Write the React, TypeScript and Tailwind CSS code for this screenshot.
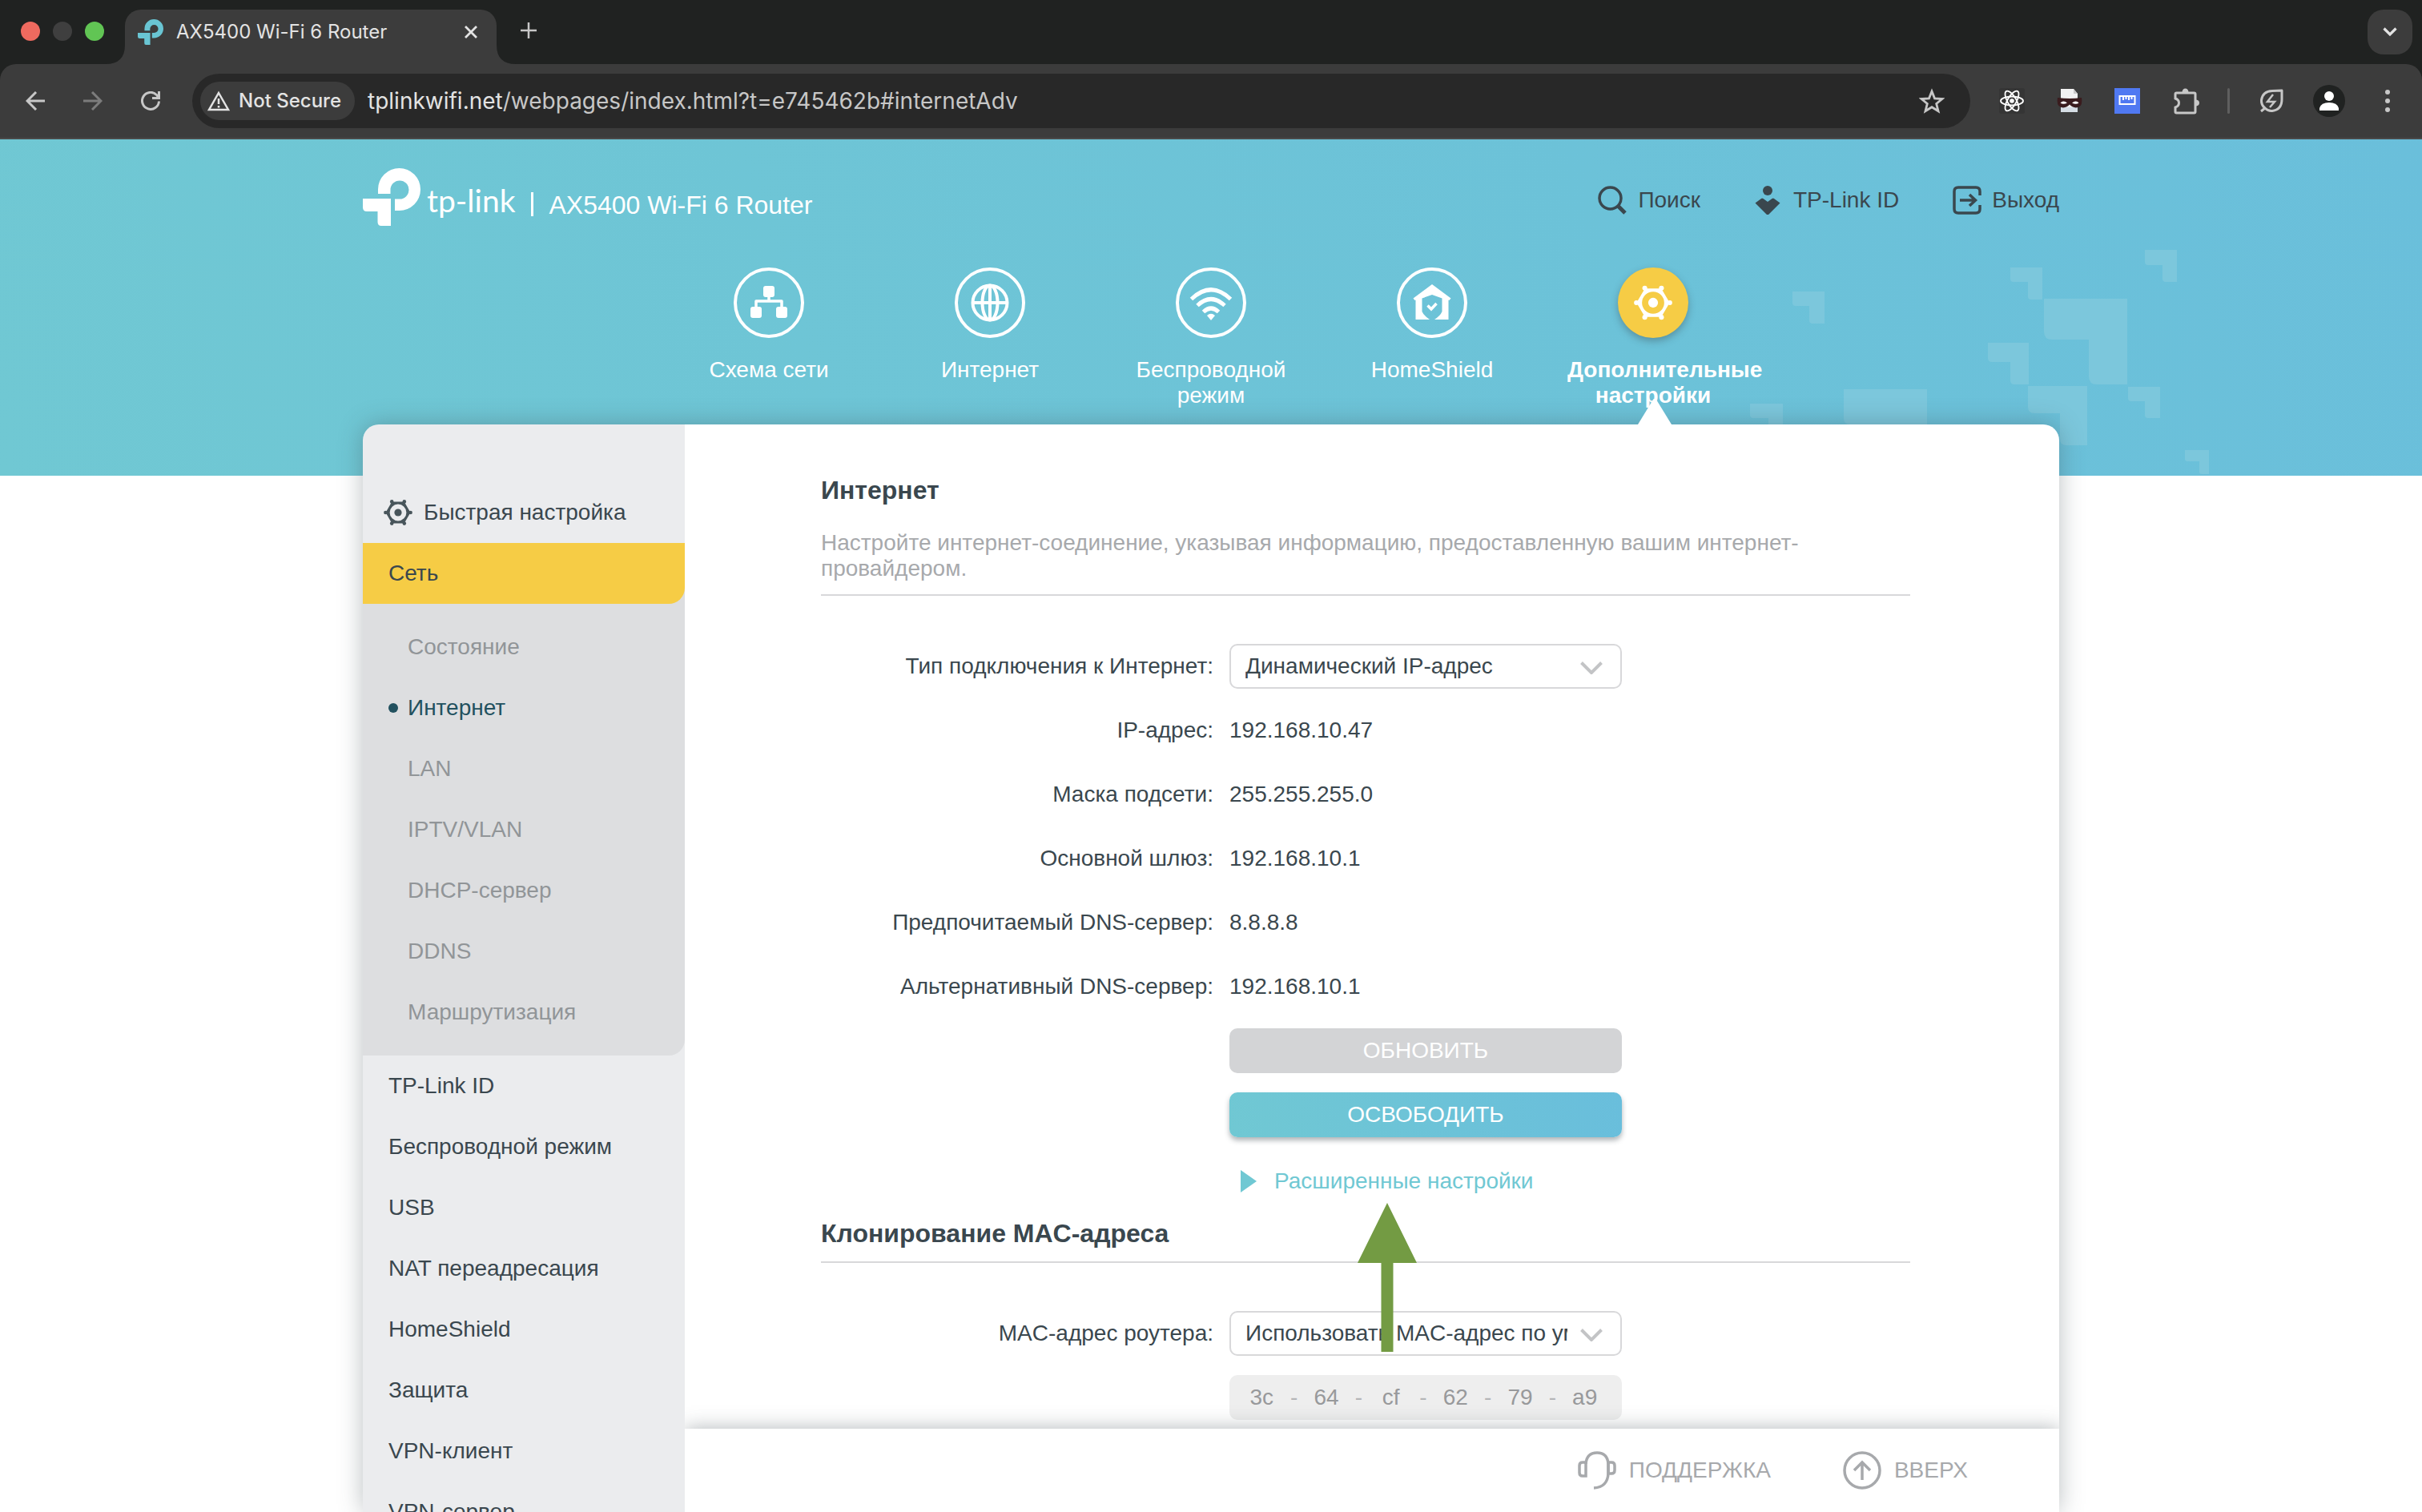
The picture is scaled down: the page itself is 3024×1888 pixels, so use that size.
import React from "react";

const arial = "font-['Liberation_Sans',Arial,sans-serif]";

const shards = [
  [2238, 364, 2278, 404, 2259, 382, 4],
  [2510, 334, 2550, 374, 2532, 352, 4],
  [2678, 312, 2718, 352, 2700, 331, 4],
  [2552, 373, 2656, 480, 2608, 424, 10],
  [2482, 428, 2533, 480, 2510, 452, 5],
  [2532, 482, 2606, 556, 2572, 516, 8],
  [2657, 483, 2697, 522, 2678, 501, 4],
  [2728, 562, 2758, 592, 2746, 576, 3],
  [2302, 486, 2406, 590, 2358, 530, 8],
  [2185, 504, 2226, 544, 2208, 522, 4],
];

function shardPath([l, t, r, b, ix, iy, q]: number[]) {
  return `M${l} ${t}H${r}V${b}H${ix + q}Q${ix} ${b} ${ix} ${b - q}V${iy}H${l + q}Q${l} ${iy} ${l} ${iy - q}Z`;
}

function Shards() {
  return (
    <svg className="absolute right-0 top-0 h-[420px] w-[924px]" viewBox="2100 174 924 420" fill="#7cc7dc" aria-hidden="true">
      {shards.map((s, i) => (
        <path key={i} d={shardPath(s)} />
      ))}
    </svg>
  );
}

function TpMark({ className }: { className: string }) {
  return (
    <svg className={className} viewBox="0 0 72 72" fill="currentColor" aria-hidden="true">
      <path d="M19 32V26.500A26.500 26.500 0 1 1 45.500 53H40V38.500H46A11.500 11.500 0 1 0 34.500 27V32Z" />
      <path d="M0 38H35V72H23Q18.500 72 18.500 67V54H5Q0 54 0 49Z" />
    </svg>
  );
}

function Gear({ className }: { className: string }) {
  return (
    <svg className={className} viewBox="0 0 36 36" fill="currentColor" aria-hidden="true">
      <path
        fillRule="evenodd"
        d="M33.500 18L25.700 31.400H10.300L2.500 18L10.300 4.600H25.700ZM18 7.600A10.400 10.400 0 1 0 18 28.400A10.400 10.400 0 1 0 18 7.600Z"
      />
      <circle cx="2.300" cy="18" r="2.200" />
      <circle cx="33.700" cy="18" r="2.200" />
      <circle cx="10.200" cy="4.400" r="2.300" />
      <circle cx="25.800" cy="4.400" r="2.300" />
      <circle cx="10.200" cy="31.600" r="2.300" />
      <circle cx="25.800" cy="31.600" r="2.300" />
      <circle cx="18" cy="18" r="4.600" />
    </svg>
  );
}

function BrowserChrome() {
  return (
    <div className="shrink-0 bg-[#202221] font-[Inter,Roboto,sans-serif]">
      <div className="flex h-20 items-end pl-[26px] pr-3">
        <div className="flex h-[82px] items-center gap-4">
          <span className="size-6 rounded-full bg-[#ee6a5f]" />
          <span className="size-6 rounded-full bg-[#3f3f3f]" />
          <span className="size-6 rounded-full bg-[#61c554]" />
        </div>
        <div className="relative ml-[26px] flex h-[68px] w-[464px] rounded-t-[20px] bg-[#3c3c3c] pl-4 pr-6">
          <svg className="absolute bottom-0 right-full size-6" viewBox="0 0 24 24" fill="#3c3c3c" aria-hidden="true">
            <path d="M24 0V24H0Q24 24 24 0Z" />
          </svg>
          <svg className="absolute bottom-0 left-full size-6" viewBox="0 0 24 24" fill="#3c3c3c" aria-hidden="true">
            <path d="M0 0V24H24Q0 24 0 0Z" />
          </svg>
          <div className="flex h-14 grow items-center">
            <TpMark className="size-8 text-[#69c5d3]" />
            <span className="ml-4 grow text-[24px] text-[#e3e3e3]">AX5400 Wi-Fi 6 Router</span>
            <button aria-label="Close tab" className="text-[#e3e3e3]">
              <svg className="size-4" viewBox="0 0 16 16" stroke="currentColor" strokeWidth="2.800" aria-hidden="true">
                <path d="M1 1L15 15M15 1L1 15" />
              </svg>
            </button>
          </div>
        </div>
        <button aria-label="New tab" className="ml-[30px] flex h-[84px] items-center text-[#c7c7c7]">
          <svg className="size-5" viewBox="0 0 20 20" stroke="currentColor" strokeWidth="2.500" aria-hidden="true">
            <path d="M10 0V20M0 10H20" />
          </svg>
        </button>
        <button aria-label="Search tabs" className="mb-3 ml-auto flex size-14 items-center justify-center rounded-[20px] bg-[#3c3c3c] text-[#e3e3e3]">
          <svg className="h-3 w-[18px]" viewBox="0 0 18 12" fill="none" stroke="currentColor" strokeWidth="3.200" aria-hidden="true">
            <path d="M1.500 1.500L9 9L16.500 1.500" />
          </svg>
        </button>
      </div>
      <div className="flex h-[94px] items-center rounded-t-[20px] border-b-2 border-[#4a4a4a] bg-[#3c3c3c] pl-8 pr-[38px] text-[#c7c7c7]">
        <button aria-label="Back">
          <svg className="size-6" viewBox="0 0 24 24" fill="none" stroke="currentColor" strokeWidth="3" aria-hidden="true">
            <path d="M24 12H2M13 1L2 12L13 23" />
          </svg>
        </button>
        <button aria-label="Forward" className="ml-12 text-[#7c7c7c]">
          <svg className="size-6" viewBox="0 0 24 24" fill="none" stroke="currentColor" strokeWidth="3" aria-hidden="true">
            <path d="M0 12H22M11 1L22 12L11 23" />
          </svg>
        </button>
        <button aria-label="Reload" className="ml-12">
          <svg className="size-6" viewBox="0 0 24 24" fill="none" stroke="currentColor" strokeWidth="3" aria-hidden="true">
            <path d="M22.500 12.500A10.500 10.500 0 1 1 19.500 4.500L22 8" />
            <path d="M22.500 0V8.500H14" />
          </svg>
        </button>
        <div className="ml-10 flex h-[68px] grow items-center rounded-full bg-[#282828] pl-[10px] pr-8">
          <button className="flex h-12 items-center gap-[11px] rounded-full bg-[#3c3c3c] pl-[9px] pr-[17px] text-[24px] font-medium text-[#e3e3e3]">
            <svg className="h-[26px] w-[28px]" viewBox="0 0 28 26" fill="none" stroke="currentColor" strokeWidth="2.500" aria-hidden="true">
              <path d="M14 3L26 24H2Z" />
              <path d="M14 10V17M14 19V21.500" />
            </svg>
            Not Secure
          </button>
          <div role="textbox" aria-label="Address" tabIndex={0} className="ml-4 grow text-[28px] text-[#c7c7c7]">
            <span className="text-[#e3e3e3]">tplinkwifi.net</span>/webpages/index.html?t=e745462b#internetAdv
          </div>
          <button aria-label="Bookmark this page">
            <svg className="size-8" viewBox="0 0 32 32" fill="none" stroke="currentColor" strokeWidth="2.800" aria-hidden="true">
              <path d="M16 4L19.500 12.800L29 13.500L21.700 19.500L24 28.700L16 23.700L8 28.700L10.300 19.500L3 13.500L12.500 12.800Z" />
            </svg>
          </button>
        </div>
        <div className="ml-9 flex items-center gap-10">
          <button aria-label="React Developer Tools">
            <svg className="size-8" viewBox="0 0 32 32" fill="none" stroke="#fff" strokeWidth="1.800" aria-hidden="true">
              <rect width="32" height="32" rx="3" fill="#353535" stroke="none" />
              <ellipse cx="16" cy="16" rx="14" ry="5.500" />
              <ellipse cx="16" cy="16" rx="14" ry="5.500" transform="rotate(60 16 16)" />
              <ellipse cx="16" cy="16" rx="14" ry="5.500" transform="rotate(120 16 16)" />
              <circle cx="16" cy="16" r="2.800" fill="#fff" stroke="none" />
            </svg>
          </button>
          <button aria-label="Mask extension">
            <svg className="size-8" viewBox="0 0 32 32" aria-hidden="true">
              <path d="M5 1H21L26 7V30H5Z" fill="#f2f2f2" />
              <path d="M21 1V7H26Z" fill="#c9c9c9" />
              <path d="M5 24H26V30H5Z" fill="#d5dde4" />
              <path d="M1 12Q16 14 31 12Q33 24 24 24.500Q19 24 16 20.500Q13 24 8 24.500Q-1 24 1 12Z" fill="#3a1c1e" />
              <path d="M4.500 18.500Q8 14.500 13 18.500Q8 21 4.500 18.500Z" fill="#fff" />
              <path d="M27.500 18.500Q24 14.500 19 18.500Q24 21 27.500 18.500Z" fill="#fff" />
            </svg>
          </button>
          <button aria-label="Page ruler">
            <svg className="size-8" viewBox="0 0 32 32" aria-hidden="true">
              <rect width="32" height="32" fill="#5079f2" />
              <path d="M6.500 10H25.500V20H6.500ZM11 10V15M14.500 10V14M18 10V15M21.500 10V14" fill="none" stroke="#fff" strokeWidth="2" />
            </svg>
          </button>
          <button aria-label="Extensions">
            <svg className="size-9" viewBox="0 0 36 36" fill="none" stroke="currentColor" strokeWidth="3" aria-hidden="true">
              <path d="M5.500 8H27.500Q29 8 29 9.500V31.500Q29 33 27.500 33H5.500Q4 33 4 31.500V26Q8.500 24.500 8.500 20.500Q8.500 16.500 4 15V9.500Q4 8 5.500 8Z" />
              <path d="M12.500 7Q13 2.500 16.500 2.500Q20 2.500 20.500 7ZM30 16.500Q34 17 34 20.500Q34 24 30 24.500Z" fill="currentColor" stroke="none" />
            </svg>
          </button>
        </div>
        <span className="ml-[33px] h-8 w-[3px] rounded-full bg-[#5f5f5f]" />
        <button aria-label="Energy saver" className="ml-9">
          <svg className="size-8" viewBox="0 0 32 32" fill="none" stroke="currentColor" strokeWidth="3" aria-hidden="true">
            <path d="M3 29L8 25M8 25Q3 21 3.500 15Q5 4 17 3.500L29 3V14Q29 27 17 28.500Q12 29 8 25Z" strokeLinejoin="round" />
            <path d="M18 8L11 17H20L14 24" strokeWidth="2.500" />
          </svg>
        </button>
        <button aria-label="Profile" className="ml-9">
          <svg className="size-10" viewBox="0 0 40 40" aria-hidden="true">
            <circle cx="20" cy="20" r="20" fill="#202221" />
            <circle cx="20" cy="14" r="6" fill="#fff" />
            <path d="M8 32V29Q10 22 20 22Q30 22 32 29V32Z" fill="#fff" />
          </svg>
        </button>
        <button aria-label="Browser menu" className="ml-12">
          <svg className="h-8 w-[10px]" viewBox="0 0 10 32" fill="currentColor" aria-hidden="true">
            <circle cx="5" cy="5" r="3" />
            <circle cx="5" cy="16" r="3" />
            <circle cx="5" cy="27" r="3" />
          </svg>
        </button>
      </div>
    </div>
  );
}

function NetworkIcon() {
  return (
    <svg className="size-12" viewBox="0 0 48 48" fill="#fff" aria-hidden="true">
      <rect x="17" y="3" width="14" height="14" rx="3" />
      <rect x="1" y="29" width="14" height="14" rx="3" />
      <rect x="33" y="29" width="14" height="14" rx="3" />
      <path d="M8 30V22H40V30M24 16V22" fill="none" stroke="#fff" strokeWidth="3.500" strokeLinejoin="round" />
    </svg>
  );
}

function GlobeIcon() {
  return (
    <svg className="size-12" viewBox="0 0 48 48" fill="none" stroke="#fff" strokeWidth="4" aria-hidden="true">
      <circle cx="24" cy="24" r="21.500" />
      <ellipse cx="24" cy="24" rx="9.500" ry="21.500" />
      <path d="M24 3V45M3 24H45" />
    </svg>
  );
}

function WifiIcon() {
  return (
    <svg className="h-[54px] w-[54px]" viewBox="0 0 54 54" fill="none" stroke="#fff" strokeWidth="5" aria-hidden="true">
      <path d="M2.500 22.500Q27 -1 51.500 22.500" />
      <path d="M10 30.500Q27 14.500 44 30.500" />
      <path d="M17.500 38.500Q27 29.500 36.500 38.500" />
      <path d="M22 43Q27 38.500 32 43L27 49Z" fill="#fff" stroke="none" />
    </svg>
  );
}

function ShieldHomeIcon() {
  return (
    <svg className="size-12" viewBox="0 0 48 48" aria-hidden="true">
      <path d="M24 1L47.500 18.500L45.500 21L44.500 20.500V45H27Q34.500 40 36.500 35V18.500L24 14L11.500 18.500V35Q13.500 40 21 45H3.500V20.500L2.500 21L0.500 18.500Z" fill="#fff" />
      <path d="M18.500 27.500L23 32L29.500 25" fill="none" stroke="#fff" strokeWidth="3.500" />
    </svg>
  );
}

const tabs = [
  { label: "Схема сети", icon: <NetworkIcon /> },
  { label: "Интернет", icon: <GlobeIcon /> },
  { label: "Беспроводной режим", icon: <WifiIcon /> },
  { label: "HomeShield", icon: <ShieldHomeIcon /> },
  { label: "Дополнительные настройки", icon: <Gear className="size-12" />, active: true },
];

function Header() {
  return (
    <header className="relative h-[420px] shrink-0 bg-[linear-gradient(72deg,#70c8d3,#6abfdb)]">
      <Shards />
      <div className="relative mx-auto flex h-[356px] max-w-[2118px] flex-col pt-9">
        <div className="flex h-[72px] items-start">
          <TpMark className="size-[72px] text-white" />
          <span className="ml-2 mt-4 font-[Lato,sans-serif] text-[39px] leading-12 text-white">tp-link</span>
          <span className="ml-5 mt-[30px] h-[30px] w-[3px] bg-white" />
          <h1 className="ml-[19px] mt-7 text-[32px] leading-9 text-white">AX5400 Wi-Fi 6 Router</h1>
          <nav className="ml-auto mt-5 flex items-center text-[28px] leading-10 text-[#3a474e]">
            <a href="#search" className="flex items-center gap-[14px]">
              <svg className="size-9" viewBox="0 0 36 36" fill="none" stroke="currentColor" strokeWidth="3.500" aria-hidden="true">
                <circle cx="15.500" cy="15.500" r="13.500" />
                <path d="M25 25L34 34" strokeWidth="5" />
              </svg>
              Поиск
            </a>
            <a href="#tplink-id" className="ml-[68px] flex items-center gap-4">
              <svg className="h-9 w-8" viewBox="0 0 32 36" fill="currentColor" aria-hidden="true">
                <circle cx="16" cy="6" r="6" />
                <path d="M8 16Q9 15 10.500 16L16 20L21.500 16Q23 15 24 16L31.500 21.500L16 37L0.500 21.500Z" />
              </svg>
              TP-Link ID
            </a>
            <a href="#logout" className="ml-[67px] flex items-center gap-[13px]">
              <svg className="size-9" viewBox="0 0 36 36" fill="none" stroke="currentColor" strokeWidth="3.500" aria-hidden="true">
                <path d="M34 12V7Q34 2 29 2H7Q2 2 2 7V29Q2 34 7 34H29Q34 34 34 29V24" />
                <path d="M9 18H28M21 11L28.500 18L21 25" />
              </svg>
              Выход
            </a>
          </nav>
        </div>
        <nav className="mt-[52px] flex justify-center">
          {tabs.map((t) => (
            <a key={t.label} href="#tab" className="relative flex h-[196px] w-[276px] flex-col items-center text-white">
              <span
                className={
                  t.active
                    ? "flex size-[88px] shrink-0 items-center justify-center rounded-full bg-[#f6cc45] shadow-[0_4px_10px_rgba(58,71,78,0.4)]"
                    : "flex size-[88px] shrink-0 items-center justify-center rounded-full border-4 border-white"
                }
              >
                {t.icon}
              </span>
              <span className={t.active ? "mt-6 w-[214px] text-center text-[28px] font-bold leading-8" : "mt-6 w-[214px] text-center text-[28px] leading-8"}>
                {t.label}
              </span>
              {t.active && (
                <svg className="absolute bottom-0 left-[119px] z-10 h-8 w-[42px]" viewBox="0 0 42 32" fill="#fff" aria-hidden="true">
                  <path d="M0 32L19 1Q21 -2 23 1L42 32Z" />
                </svg>
              )}
            </a>
          ))}
        </nav>
      </div>
    </header>
  );
}

const subItems = ["Состояние", "Интернет", "LAN", "IPTV/VLAN", "DHCP-сервер", "DDNS", "Маршрутизация"];
const items = ["TP-Link ID", "Беспроводной режим", "USB", "NAT переадресация", "HomeShield", "Защита", "VPN-клиент", "VPN-сервер"];

function Sidebar() {
  return (
    <aside className="w-[402px] shrink-0 overflow-hidden rounded-tl-[20px] bg-[#ebecee] pt-[72px] text-[28px] text-[#3a474e]">
      <a href="#quick" className="flex h-[76px] items-center gap-[14px] pl-[26px]">
        <Gear className="size-9 text-[#48555b]" />
        Быстрая настройка
      </a>
      <div className="rounded-br-[20px] bg-[#dddee0]">
        <a href="#network" className="flex h-[76px] items-center rounded-br-[20px] bg-[#f6cc45] pl-8">
          Сеть
        </a>
        <ul className="py-4">
          {subItems.map((s) => (
            <li key={s}>
              {s === "Интернет" ? (
                <a href="#sub" aria-current="page" className="flex h-[76px] items-center gap-3 pl-8 text-[#22515f]">
                  <span className="size-3 rounded-full bg-[#22515f]" />
                  {s}
                </a>
              ) : (
                <a href="#sub" className="flex h-[76px] items-center pl-14 text-[#919598]">
                  {s}
                </a>
              )}
            </li>
          ))}
        </ul>
      </div>
      <ul>
        {items.map((s) => (
          <li key={s}>
            <a href="#item" className="flex h-[76px] items-center pl-8">
              {s}
            </a>
          </li>
        ))}
      </ul>
    </aside>
  );
}

function Picker({ id, value }: { id: string; value: string }) {
  return (
    <div className="relative w-[490px]">
      <select id={id} className="block h-14 w-full appearance-none rounded-[10px] border-2 border-[#d8d8da] bg-white pl-[18px] pr-[66px] text-[28px] text-[#3a474e]">
        <option>{value}</option>
      </select>
      <svg className="pointer-events-none absolute right-6 top-[22px] h-4 w-[28px]" viewBox="0 0 28 16" fill="none" stroke="#c3c4c6" strokeWidth="4" aria-hidden="true">
        <path d="M1.500 1.500L14 14L26.500 1.500" />
      </svg>
    </div>
  );
}

const rows = [
  ["IP-адрес:", "192.168.10.47"],
  ["Маска подсети:", "255.255.255.0"],
  ["Основной шлюз:", "192.168.10.1"],
  ["Предпочитаемый DNS-сервер:", "8.8.8.8"],
  ["Альтернативный DNS-сервер:", "192.168.10.1"],
];

const mac = ["3c", "64", "cf", "62", "79", "a9"];

function Content() {
  return (
    <div className="min-h-0 flex-1 overflow-hidden pl-[170px] pr-[186px] pt-16">
      <h2 className="text-[32px] font-bold leading-9">Интернет</h2>
      <p className="mt-8 border-b-2 border-[#d8d8da] pb-4 pr-[100px] text-[28px] leading-8 text-[#a7a9ac]">
        Настройте интернет-соединение, указывая информацию, предоставленную вашим интернет-провайдером.
      </p>
      <div className="mt-[60px] grid grid-cols-[490px_490px] items-center gap-x-5 gap-y-6 text-[28px]">
        <label htmlFor="wan" className="whitespace-nowrap text-right">
          Тип подключения к Интернет:
        </label>
        <Picker id="wan" value="Динамический IP-адрес" />
        {rows.map(([k, v]) => (
          <React.Fragment key={k}>
            <span className="flex h-14 items-center justify-end whitespace-nowrap">{k}</span>
            <output aria-label={k}>{v}</output>
          </React.Fragment>
        ))}
        <button disabled className="col-start-2 h-14 rounded-[10px] bg-[#d3d4d6] text-white">
          ОБНОВИТЬ
        </button>
        <button className="col-start-2 h-14 rounded-[10px] bg-[linear-gradient(72deg,#70c8d3,#69bedc)] text-white shadow-[0_4px_6px_rgba(58,71,78,0.4)]">
          ОСВОБОДИТЬ
        </button>
        <div className="relative col-start-2 h-[62px]">
          <button className="flex h-[62px] items-center gap-[22px] pl-[14px] text-[#70c8d3]">
            <svg className="h-7 w-5" viewBox="0 0 20 28" fill="currentColor" aria-hidden="true">
              <path d="M0 0L20 14L0 28Z" />
            </svg>
            Расширенные настройки
          </button>
          <svg className="absolute left-[160px] top-[58px] z-10 h-[186px] w-[74px]" viewBox="0 0 74 186" fill="#739b43" aria-hidden="true">
            <path d="M37 0L74 75H44.500V186H29.500V75H0Z" />
          </svg>
        </div>
      </div>
      <h2 className="mt-4 border-b-2 border-[#d8d8da] pb-[17px] text-[32px] font-bold leading-9">Клонирование MAC-адреса</h2>
      <div className="mt-[60px] grid grid-cols-[490px_490px] items-center gap-x-5 gap-y-6 text-[28px]">
        <label htmlFor="mac" className="whitespace-nowrap text-right">
          MAC-адрес роутера:
        </label>
        <Picker id="mac" value="Использовать MAC-адрес по умолчанию" />
        <div className="col-start-2 flex h-14 items-center rounded-[10px] bg-[#eeeeee] pl-[10px] pr-4 text-[#98999b]">
          {mac.map((m, i) => (
            <React.Fragment key={i}>
              {i > 0 && <span className="w-5 shrink-0 text-center text-[#b4b5b7]">-</span>}
              <input aria-label={`MAC ${i + 1}`} defaultValue={m} disabled className="w-0 min-w-0 flex-1 text-center" />
            </React.Fragment>
          ))}
        </div>
      </div>
    </div>
  );
}

function Footer() {
  return (
    <footer className="relative flex h-[104px] shrink-0 items-center justify-end bg-white pr-[114px] text-[28px] text-[#a7a9ac] shadow-[0_0_24px_rgba(58,71,78,0.4)]">
      <a href="#support" className="flex items-center gap-4">
        <svg className="size-12" viewBox="0 0 48 48" fill="none" stroke="currentColor" strokeWidth="3.500" aria-hidden="true">
          <path d="M10 31H6Q2 31 2 27V18Q2 14 6 14H10Z" />
          <path d="M38 28V14H42Q46 14 46 18V24Q46 28 42 28Z" />
          <path d="M10 16Q11 2 24 2Q37 2 38 16V28Q37 45 20 46" />
        </svg>
        ПОДДЕРЖКА
      </a>
      <button className="ml-[90px] flex items-center gap-4">
        <svg className="size-12" viewBox="0 0 48 48" fill="none" stroke="currentColor" strokeWidth="3.500" aria-hidden="true">
          <circle cx="24" cy="24" r="22" />
          <path d="M24 36V14M14 24L24 14L34 24" />
        </svg>
        ВВЕРХ
      </button>
    </footer>
  );
}

export default function App() {
  return (
    <div className="flex h-screen flex-col overflow-hidden bg-white">
      <BrowserChrome />
      <div className={`flex min-h-0 flex-1 flex-col ${arial}`}>
        <Header />
        <div className="relative mx-auto -mt-16 flex min-h-0 w-full max-w-[2118px] flex-1 rounded-t-[20px] shadow-[0_0_30px_rgba(58,71,78,0.35)]">
          <Sidebar />
          <main className="flex min-w-0 flex-1 flex-col overflow-hidden rounded-tr-[20px] bg-white text-[#3a474e]">
            <Content />
            <Footer />
          </main>
        </div>
      </div>
    </div>
  );
}
